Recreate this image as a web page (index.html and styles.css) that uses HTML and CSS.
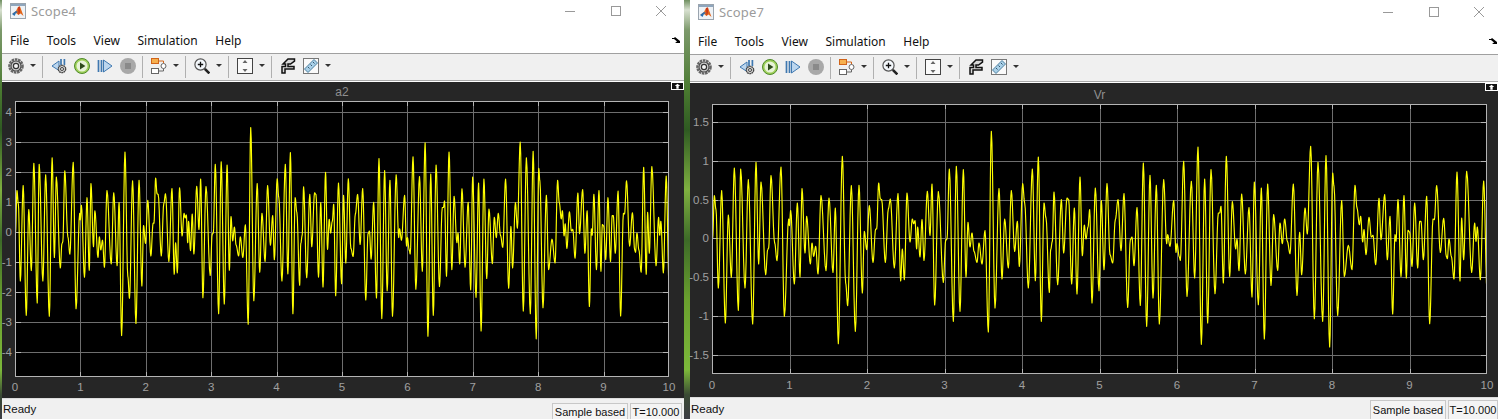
FILE: index.html
```html
<!DOCTYPE html>
<html lang="en">
<head>
<meta charset="utf-8">
<title>Scopes</title>
<link rel="stylesheet" href="styles.css">
</head>
<body>
<svg class="defs" width="0" height="0">
  <symbol id="i-logo" viewBox="0 0 16 16">
    <rect x="0.5" y="0.5" width="15" height="15" fill="#eef2f6" stroke="#9aa4ae"/>
    <rect x="1" y="1" width="14" height="2" fill="#8fa6bd"/>
    <path d="M2 11 L6 8 L8 4 L10 3.5 L13.5 13 L10.5 10.5 L8.5 12 L6 10 Z" fill="#e2661c"/>
    <path d="M2 11 L6 8 L8 9 L6 10 L4.5 13 Z" fill="#2a6fb0"/>
    <path d="M8 4 L10 3.5 L10 9 L8.5 12 Z" fill="#c9381a"/>
  </symbol>
  <symbol id="i-gear" viewBox="0 0 16 16">
    <circle cx="8" cy="8" r="6.6" fill="none" stroke="#666" stroke-width="2.4" stroke-dasharray="2.6 .7"/>
    <circle cx="8" cy="8" r="5" fill="#cfcfcf" stroke="#444" stroke-width="1.1"/>
    <circle cx="8" cy="8" r="2.6" fill="#f4f4f4" stroke="#333" stroke-width="1.2"/>
  </symbol>
  <symbol id="i-back" viewBox="0 0 16 16">
    <path d="M8 3 L1 8 L8 12.5 Z" fill="#bcd6ee" stroke="#3f78b0"/>
    <path d="M10 1 V7 M13.4 1 V7" stroke="#3f78b0" stroke-width="1.7"/>
    <circle cx="11" cy="11" r="3.7" fill="#ccc" stroke="#444" stroke-width="1.3" stroke-dasharray="1.8 .5"/>
    <circle cx="11" cy="11" r="1.5" fill="#eee" stroke="#333" stroke-width=".9"/>
  </symbol>
  <symbol id="i-play" viewBox="0 0 16 16">
    <circle cx="8" cy="8" r="7.5" fill="#9fd05a" stroke="#4f8a2a"/>
    <circle cx="8" cy="8" r="5.5" fill="#e8f3d8"/>
    <path d="M6 4.6 L11.4 8 L6 11.4 Z" fill="#2e4a1c"/>
  </symbol>
  <symbol id="i-forward" viewBox="0 0 16 16">
    <path d="M1.5 2 V14 M4.5 2 V14" stroke="#3f78b0" stroke-width="1.7"/>
    <path d="M6.5 2 L15 8 L6.5 14 Z" fill="#bcd6ee" stroke="#3f78b0"/>
  </symbol>
  <symbol id="i-stop" viewBox="0 0 16 16">
    <circle cx="8" cy="8" r="8" fill="#a8a8a8"/>
    <rect x="5" y="5" width="6" height="6" fill="#8a8a8a"/>
  </symbol>
  <symbol id="i-block" viewBox="0 0 16 16">
    <rect x="0.5" y="0.5" width="7" height="5" fill="#f6b04e" stroke="#d0641a"/>
    <rect x="0.5" y="10.5" width="7" height="5" fill="#fff" stroke="#666"/>
    <path d="M7.5 3 H12.5 V5.5" fill="none" stroke="#d0641a"/>
    <path d="M7.5 13 H12.5 V10.5" fill="none" stroke="#666"/>
    <circle cx="12.5" cy="8" r="2.5" fill="#fff" stroke="#666"/>
  </symbol>
  <symbol id="i-zoom" viewBox="0 0 16 16">
    <circle cx="6.5" cy="6.5" r="5.6" fill="#f4f8fc" stroke="#555" stroke-width="1.2"/>
    <path d="M3.8 6.5 H9.2 M6.5 3.8 V9.2" stroke="#111" stroke-width="1.3"/>
    <path d="M10.8 10.8 L15.4 15.4" stroke="#222" stroke-width="2.6"/>
  </symbol>
  <symbol id="i-fit" viewBox="0 0 16 16">
    <rect x="0.5" y="0.5" width="15" height="15" fill="#fafafa" stroke="#444"/>
    <path d="M8 2 L10.5 5 H5.5 Z M8 14 L10.5 11 H5.5 Z" fill="#666"/>
  </symbol>
  <symbol id="i-hook" viewBox="0 0 16 16">
    <path d="M8 1 H14.5 V3 L10.5 6 H8 V8.5 H14 V11 H5 V15 H2 V8.5 H5.5 V6 H3 Z" fill="#d8d8d8" stroke="#111" stroke-width="1.5" stroke-linejoin="miter"/>
  </symbol>
  <symbol id="i-ruler" viewBox="0 0 16 16">
    <rect x="0.5" y="0.5" width="15" height="15" fill="#fafafa" stroke="#777"/>
    <path d="M1.5 11 L11 1.5 L14.5 5 L5 14.5 Z" fill="#a9d0e8" stroke="#4c7f9f"/>
    <path d="M5 9 L6.5 10.5 M7.5 6.5 L9 8 M10 4 L11.5 5.5" stroke="#33566e"/>
  </symbol>
  <symbol id="i-undock" viewBox="0 0 8 6">
    <path d="M0 1 H2 L3 0 L8 4 V0 V6 H3 L5 4.6 L2 2 H0 Z" fill="#000"/>
  </symbol>
  <symbol id="i-min" viewBox="0 0 10 10"><path d="M0 5.5 H10" stroke="#999"/></symbol>
  <symbol id="i-max" viewBox="0 0 10 10"><rect x="0.5" y="0.5" width="9" height="9" fill="none" stroke="#999"/></symbol>
  <symbol id="i-close" viewBox="0 0 10 10"><path d="M0 0 L10 10 M10 0 L0 10" stroke="#999"/></symbol>
  <symbol id="i-expand" viewBox="0 0 9 7"><path d="M4.5 0.5 L8 3.5 H6 V7 H3 V3.5 H1 Z" fill="#fff"/></symbol>
</svg>

<div class="desktop">
  <section class="window window-a">
    <header class="titlebar">
      <svg class="logo"><use href="#i-logo"/></svg>
      <span class="title-text">Scope4</span>
      <div class="caption"><svg class="cap"><use href="#i-min"/></svg><svg class="cap"><use href="#i-max"/></svg><svg class="cap"><use href="#i-close"/></svg></div>
    </header>
    <nav class="menubar">
      <span>File</span><span>Tools</span><span>View</span><span>Simulation</span><span>Help</span>
      <svg class="undock"><use href="#i-undock"/></svg>
    </nav>
    <div class="toolbar">
      <span class="btn first"><svg><use href="#i-gear"/></svg></span><span class="caret"></span><span class="sep"></span>
      <span class="btn"><svg><use href="#i-back"/></svg></span><span class="btn"><svg><use href="#i-play"/></svg></span><span class="btn"><svg><use href="#i-forward"/></svg></span><span class="btn"><svg><use href="#i-stop"/></svg></span><span class="sep"></span>
      <span class="btn"><svg><use href="#i-block"/></svg></span><span class="caret"></span><span class="sep"></span>
      <span class="btn"><svg><use href="#i-zoom"/></svg></span><span class="caret"></span><span class="sep"></span>
      <span class="btn"><svg><use href="#i-fit"/></svg></span><span class="caret"></span><span class="sep"></span>
      <span class="btn"><svg><use href="#i-hook"/></svg></span><span class="btn"><svg><use href="#i-ruler"/></svg></span><span class="caret"></span>
    </div>
    <main class="scope">
      <div class="plot-title">a2</div>
      <div class="y-axis"><span>4</span><span>3</span><span>2</span><span>1</span><span>0</span><span>-1</span><span>-2</span><span>-3</span><span>-4</span></div>
      <svg class="plot" data-ys="11 41 71 101 131 161 191 221 251" data-zero="131" data-sy="0.98"></svg>
      <div class="x-axis"><span>0</span><span>1</span><span>2</span><span>3</span><span>4</span><span>5</span><span>6</span><span>7</span><span>8</span><span>9</span><span>10</span></div>
      <svg class="expand"><use href="#i-expand"/></svg>
    </main>
    <footer class="status">
      <span class="ready">Ready</span>
      <span class="cell cell-mode">Sample based</span>
      <span class="cell cell-time">T=10.000</span>
    </footer>
  </section>

  <section class="window window-b">
    <header class="titlebar">
      <svg class="logo"><use href="#i-logo"/></svg>
      <span class="title-text">Scope7</span>
      <div class="caption"><svg class="cap"><use href="#i-min"/></svg><svg class="cap"><use href="#i-max"/></svg><svg class="cap"><use href="#i-close"/></svg></div>
    </header>
    <nav class="menubar">
      <span>File</span><span>Tools</span><span>View</span><span>Simulation</span><span>Help</span>
      <svg class="undock"><use href="#i-undock"/></svg>
    </nav>
    <div class="toolbar">
      <span class="btn first"><svg><use href="#i-gear"/></svg></span><span class="caret"></span><span class="sep"></span>
      <span class="btn"><svg><use href="#i-back"/></svg></span><span class="btn"><svg><use href="#i-play"/></svg></span><span class="btn"><svg><use href="#i-forward"/></svg></span><span class="btn"><svg><use href="#i-stop"/></svg></span><span class="sep"></span>
      <span class="btn"><svg><use href="#i-block"/></svg></span><span class="caret"></span><span class="sep"></span>
      <span class="btn"><svg><use href="#i-zoom"/></svg></span><span class="caret"></span><span class="sep"></span>
      <span class="btn"><svg><use href="#i-fit"/></svg></span><span class="caret"></span><span class="sep"></span>
      <span class="btn"><svg><use href="#i-hook"/></svg></span><span class="btn"><svg><use href="#i-ruler"/></svg></span><span class="caret"></span>
    </div>
    <main class="scope">
      <div class="plot-title">Vr</div>
      <div class="y-axis"><span>1.5</span><span>1</span><span>0.5</span><span>0</span><span>-0.5</span><span>-1</span><span>-1.5</span></div>
      <svg class="plot" data-ys="18 57 96 134 173 212 251" data-zero="134" data-sy="1"></svg>
      <div class="x-axis"><span>0</span><span>1</span><span>2</span><span>3</span><span>4</span><span>5</span><span>6</span><span>7</span><span>8</span><span>9</span><span>10</span></div>
      <svg class="expand"><use href="#i-expand"/></svg>
    </main>
    <footer class="status">
      <span class="ready">Ready</span>
      <span class="cell cell-mode">Sample based</span>
      <span class="cell cell-time">T=10.000</span>
    </footer>
  </section>
</div>
<script src="script.js"></script>
</body>
</html>
```
FILE: styles.css
```css
* { box-sizing: border-box; }
html, body { margin: 0; height: 419px; overflow: hidden; }
.defs { display: block; height: 0; width: 0; overflow: hidden; }

.desktop {
  display: flex;
  gap: 6px;
  height: 419px;
  width: 1498px;
  padding-left: 2px;
  background: linear-gradient(#6f8f60 0, #d8e0d0 10px, #7d9a6c 30px, #4a7a30 90px, #2f5a22 130px, #7fb040 190px, #3d6a28 240px, #6aa02e 300px, #7cb83a 370px, #3a4a34 395px, #3c3c44 419px);
  font-family: "Liberation Sans", sans-serif;
}
.window { display: flex; flex-direction: column; background: #fff; height: 419px; }
.window-a { width: 682px; --bar: 28px; --cap-pad: 18px; --undock-pad: 4px; --gutter: 13px; --plot-w: 654px; --plot-h: 276px; --title-h: 19px; --title-pad: 2px; --status-h: 21px; --cell-h: 16px; --cell-end: 2px; --y-top: 11px; --y-bot: 25px; --x-top: 3px; }
.window-b { width: 808px; --bar: 29px; --cap-pad: 14px; --undock-pad: 1px; --gutter: 22px; --plot-w: 775px; --plot-h: 270px; --title-h: 21px; --title-pad: 4px; --status-h: 22px; --cell-h: 19px; --cell-end: 0px; --y-top: 18px; --y-bot: 19px; --x-top: 4px; }

.titlebar { height: var(--bar); flex: none; display: flex; align-items: center; padding: 0 var(--cap-pad) 6px 8px; background: #fff; }
.window-b .titlebar { padding-bottom: 5px; }
.logo { width: 16px; height: 16px; flex: none; }
.title-text { margin-left: 5px; font: 13px "Noto Sans", sans-serif; color: #9b9b9b; letter-spacing: .2px; }
.caption { margin-left: auto; display: flex; gap: 35.5px; }
.cap { width: 10px; height: 10px; display: block; }

.menubar { height: 26px; flex: none; display: flex; align-items: center; gap: 17.6px; padding: 0 var(--undock-pad) 1px 8px; background: #fff; border-bottom: 1px solid #a0a0a0; font: 12px "Noto Sans", sans-serif; color: #111; }
.undock { width: 8px; height: 6px; margin-left: auto; }

.toolbar { height: 28px; flex: none; display: flex; align-items: center; padding: 0 0 2px 3px; background: #f0f0f0; border-bottom: 1px solid #fff; box-shadow: inset 0 -1px 0 #a8a8a8; }
.btn { width: 23px; height: 22px; padding-bottom: 2px; display: flex; align-items: center; justify-content: center; flex: none; }
.btn.first { width: 22px; }
.btn svg { width: 16px; height: 16px; display: block; }
.caret { width: 12px; height: 22px; padding-bottom: 2px; flex: none; display: flex; align-items: center; justify-content: center; }
.caret::after { content: ""; border: 3px solid transparent; border-top: 3px solid #333; border-bottom: 0; }
.sep { width: 1px; height: 22px; background: #b0b0b0; margin: 0 4px 0 3px; flex: none; }

.scope { position: relative; flex: 1; min-height: 0; display: grid; background: #262626; align-content: start;
  grid-template-columns: var(--gutter) var(--plot-w);
  grid-template-rows: var(--title-h) var(--plot-h) auto; }
.plot-title { grid-column: 2; grid-row: 1; text-align: center; color: #8f8f8f; font-size: 12px; line-height: 16px; padding-top: var(--title-pad); }
.y-axis { grid-column: 1; grid-row: 2; display: flex; flex-direction: column; justify-content: space-between; align-items: flex-end; padding: var(--y-top) 3px var(--y-bot) 0; color: #a0a0a0; font-size: 11.5px; }
.y-axis span { display: block; height: 0; line-height: 0; white-space: nowrap; }
.plot { grid-column: 2; grid-row: 2; width: var(--plot-w); height: var(--plot-h); display: block; background: #000; }
.x-axis { grid-column: 2; grid-row: 3; display: flex; justify-content: space-between; padding-top: var(--x-top); color: #a0a0a0; font-size: 11.5px; line-height: 14px; }
.x-axis span { width: 0; display: flex; justify-content: center; }
.expand { position: absolute; top: 0; right: 0; width: 13px; height: 8px; padding: 0 2px; background: #111; border: 1px solid #fff; }

.grid { stroke: #6e6e6e; stroke-width: 1; shape-rendering: crispEdges; fill: none; }
.ticks { stroke: #b4b4b4; stroke-width: 1; shape-rendering: crispEdges; fill: none; }
.frame { stroke: #b4b4b4; stroke-width: 1; shape-rendering: crispEdges; fill: none; }
.wave { stroke: #ffff00; stroke-width: 1.15; fill: none; stroke-linejoin: round; }

.status { height: var(--status-h); flex: none; display: flex; align-items: flex-end; gap: 2px; padding-right: var(--cell-end); background: #f0f0f0; border-top: 1px solid #dcdcdc; font-size: 11px; color: #111; }
.ready { margin-right: auto; padding-left: 1px; align-self: center; font-size: 11.5px; }
.cell { height: var(--cell-h); display: flex; align-items: center; justify-content: center; background: #f4f4f4; border: 1px solid #c8c8c8; border-bottom: 0; }
.cell-mode { width: 76px; }
.cell-time { width: 52px; }
.window-b .cell-time { width: 50px; }
```
FILE: script.js
```js
// Traces of the signal, as [px, py] within five overlapping views of the Vr plot.
var views = [
  [710, [8,355,13,228,18,270,25,505,35,213,46,610,55,286,64,473,73,145,85,572,92,148,105,505,115,180,128,613,138,128,146,433,153,187,167,465,173,390,176,385,183,168,194,370,201,423,213,142,223,590,236,298,238,318,242,273,253,493,262,250,270,472,276,207,285,400,290,290,301,433,306,370,311,410,317,380,324,463,333,228,348,453,357,235,369,458,376,265,385,672,397,110,407,490,413,558,424,198,436,635,447,197,457,520,463,335,470,390]],
  [865, [13,258,24,428,32,328,35,328,41,190,46,238,50,240,61,428,70,268,76,238,88,445,99,222,107,484,112,388,118,480,126,220,135,367,142,298,146,312,150,303,155,388,158,322,165,412,171,300,177,422,187,215,195,347,201,193,209,556,220,216,235,488,242,362,246,358,253,148,265,605,274,140,285,575,295,150,303,472,309,308,315,382,321,340,327,395,336,428,342,370,351,433,360,333,370,637,379,35,390,565,402,207,411,478,419,298,430,445,439,213,449,395,457,305,463,440,473,192]],
  [1020, [14,250,25,505,37,148,46,483,55,112,64,605,72,250,78,295,88,518,92,390,97,365,102,217,113,495,124,240,131,400,141,235,146,240,155,493,163,265,171,523,180,172,187,408,193,316,198,358,204,322,209,270,216,550,226,205,237,513,244,243,252,450,261,192,270,405,278,430,286,300,294,240,303,393,312,222,323,563,331,360,336,352,342,438,351,264,361,557,370,130,380,620,390,167,399,535,409,197,418,613,431,180,440,372,443,345,450,380,461,243,468,398,471,372,478,412]],
  [1175, [16,422,26,125,36,530,49,185,59,475,69,82,79,674,89,178,98,610,108,150,120,522,130,280,134,280,138,260,145,490,154,110,164,470,172,246,182,388,186,358,192,453,200,223,211,463,222,264,231,532,238,187,250,555,259,205,268,658,278,193,288,497,296,285,308,452,315,310,322,372,329,298,337,365,345,402,355,193,366,527,374,338,380,465,390,265,397,343,407,80,418,597,429,128,443,605,453,108,464,682,473,160]],
  [1330, [12,200,23,587,35,243,43,470,55,377,66,450,75,197,81,265,88,315,92,290,98,367,102,330,108,405,117,293,124,352,129,347,137,435,147,236,153,360,164,225,172,420,180,290,188,583,195,345,198,365,204,240,213,470,222,228,229,475,234,332,239,337,246,440,254,250,263,445,269,305,273,305,280,420,290,230,299,612,309,298,313,300,320,198,331,398,341,296,349,410,352,417,357,358,364,410,372,478,381,157,390,484,395,295,401,420,410,155,425,458,434,310,438,365,442,322,451,480,461,184,471,510]]
];

var points = [];
views.forEach(function (v) {
  for (var i = 0; i < v[1].length; i += 2) {
    points.push([v[0] + v[1][i] / 3 - 712, (v[1][i + 1] - 355) / 3]);
  }
});

var NS = "http://www.w3.org/2000/svg";
function add(svg, cls, d) {
  var p = document.createElementNS(NS, "path");
  p.setAttribute("class", cls);
  p.setAttribute("d", d);
  svg.appendChild(p);
}

document.querySelectorAll(".plot").forEach(function (svg) {
  var box = svg.getBoundingClientRect();
  var w = box.width, h = box.height;
  svg.setAttribute("viewBox", "0 0 " + w + " " + h);
  var ys = svg.dataset.ys.split(" ").map(Number);
  var zero = +svg.dataset.zero, sy = +svg.dataset.sy, sx = w / 775;

  var grid = "", ticks = "";
  for (var k = 1; k < 10; k++) {
    var x = Math.round(k * w / 10) + 0.5;
    grid += "M" + x + " 0V" + h;
    ticks += "M" + x + " 0v5M" + x + " " + h + "v-5";
  }
  ys.forEach(function (y) {
    grid += "M0 " + (y + 0.5) + "H" + w;
    ticks += "M0 " + (y + 0.5) + "h6M" + w + " " + (y + 0.5) + "h-6";
  });
  add(svg, "grid", grid);
  add(svg, "ticks", ticks);

  var d = "";
  for (var i = 0; i < points.length; i++) {
    var a = points[i], b = points[i + 1];
    if (i === 0) d += "M" + (a[0] * sx).toFixed(2) + " " + (zero + a[1] * sy).toFixed(2);
    if (!b) break;
    for (var s = 1; s <= 6; s++) {
      var t = s / 6, e = (1 - Math.cos(Math.PI * t)) / 2;
      var px = a[0] + (b[0] - a[0]) * t, py = a[1] + (b[1] - a[1]) * e;
      d += "L" + (px * sx).toFixed(2) + " " + (zero + py * sy).toFixed(2);
    }
  }
  add(svg, "wave", d);
  add(svg, "frame", "M0.5 " + h + "V0.5H" + (w - 0.5) + "V" + (h - 0.5) + "H0.5");
});
```
